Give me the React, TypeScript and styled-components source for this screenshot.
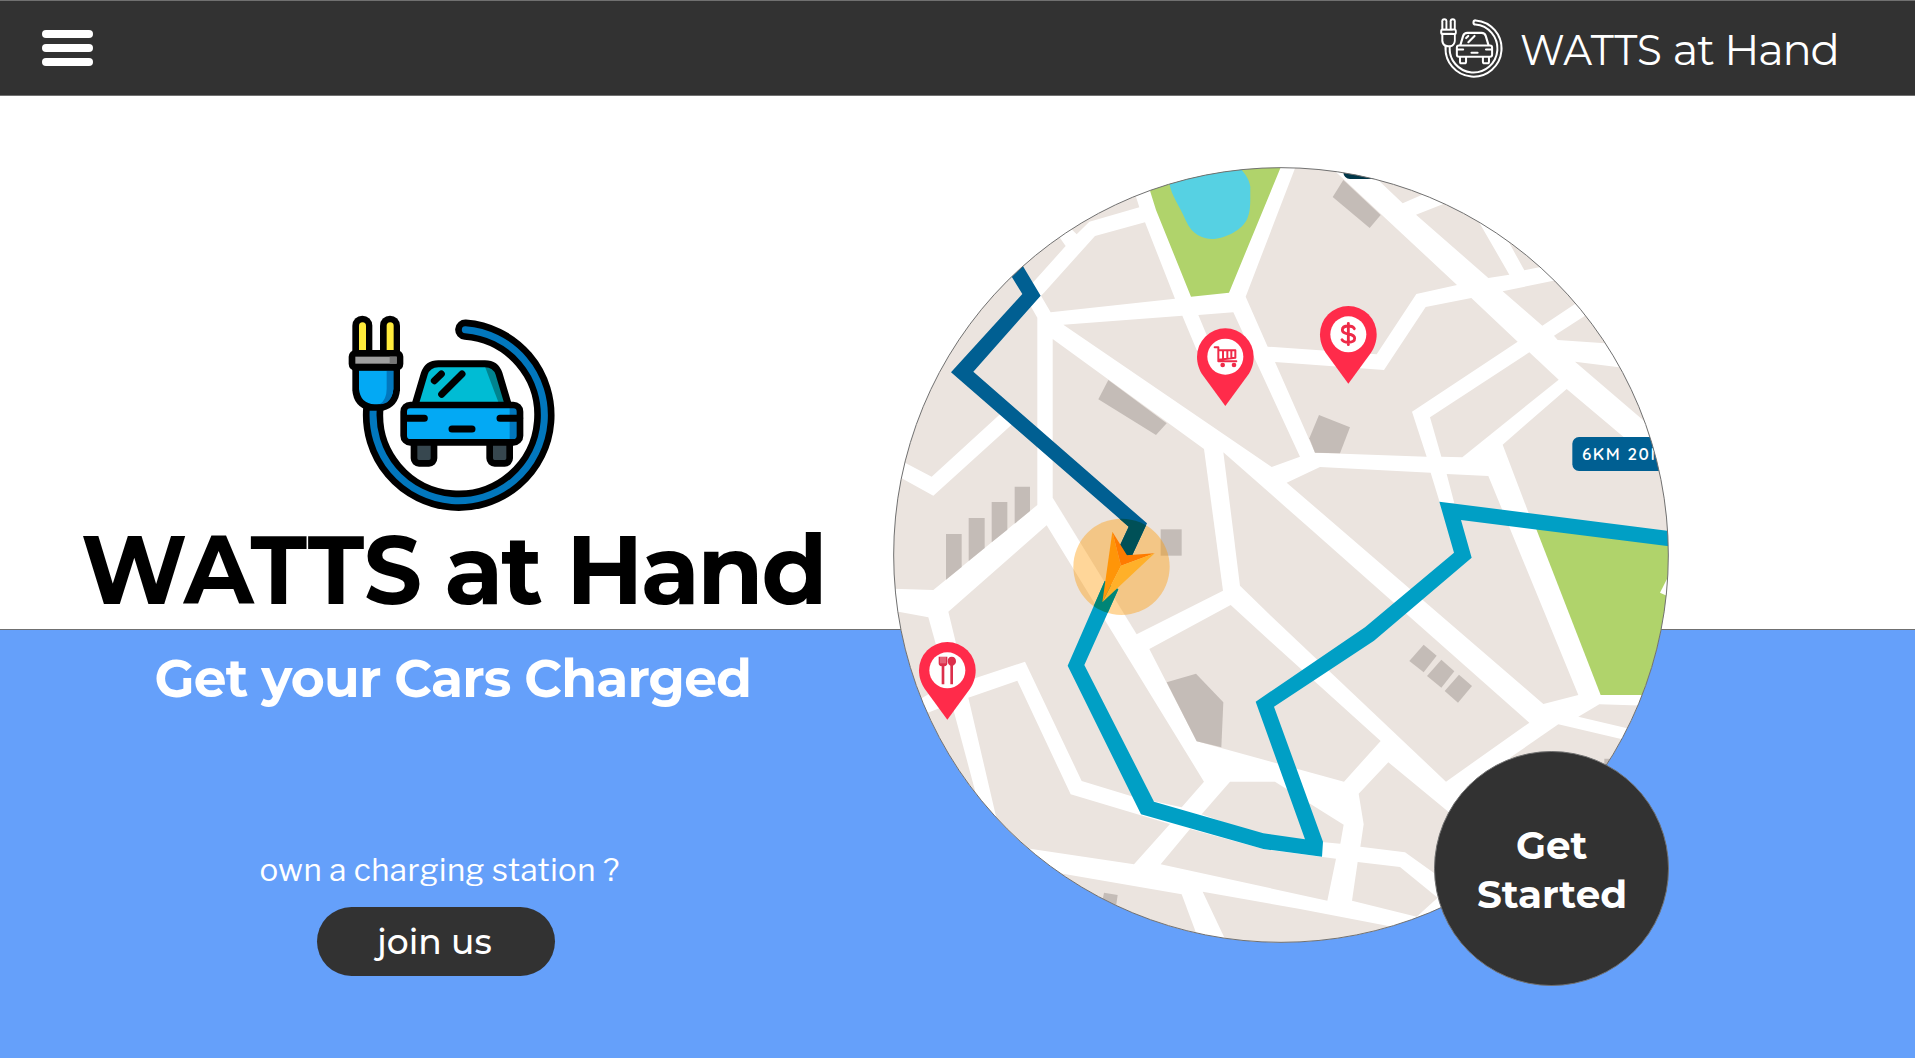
import React from 'react';
import styled, { createGlobalStyle } from 'styled-components';

const GlobalStyle = createGlobalStyle`
  *, *::before, *::after { box-sizing: border-box; }
  body { margin: 0; background: #ffffff; font-family: Montserrat, Inter, sans-serif; overflow: hidden; }
  h1, p { margin: 0; }
`;

const dark = '#323232';
const blue = '#65a0fa';
const outline = '#707070';

const Page = styled.div`
  display: flex;
  flex-direction: column;
  height: 1058px;
`;

const Header = styled.header`
  display: flex;
  align-items: center;
  justify-content: space-between;
  height: 96px;
  padding: 0 79px 0 42px;
  background: ${dark};
  border: solid ${outline};
  border-width: 1px 0;
`;

const MenuButton = styled.button`
  display: flex;
  flex-direction: column;
  gap: 6px;
  width: 51px;
  padding: 0;
  border: 0;
  background: none;
`;

const MenuBar = styled.span`
  height: 8px;
  border-radius: 4px;
  background: #ffffff;
`;

const Brand = styled.div`
  display: flex;
  align-items: center;
  gap: 17px;
`;

const Line = styled.span<{ $width: number; $spacing?: number }>`
  display: block;
  width: ${(p) => p.$width}px;
  letter-spacing: ${(p) => p.$spacing ?? 0}px;
  text-align: left;
  white-space: nowrap;
`;

const Word = styled.span<{ $spacing: number }>`
  letter-spacing: ${(p) => p.$spacing}em;
`;

const CondensedWord = styled.span<{ $scale: number; $trim: number }>`
  display: inline-block;
  margin-right: -${(p) => p.$trim}em;
  transform: scaleX(${(p) => p.$scale});
  transform-origin: left center;
`;

const BrandName = styled.div`
  padding-top: 3px;
  color: #ffffff;
  font-size: 43.3px;
  font-weight: 400;
  line-height: 50px;
`;

const Hero = styled.main`
  display: flex;
  flex: 1;
  background: linear-gradient(#ffffff 0 533px, ${outline} 533px 534px, ${blue} 534px);
`;

const Intro = styled.section`
  display: flex;
  flex-direction: column;
  align-items: center;
  width: 893px;
  padding: 219px 0 0 11px;
`;

const Title = styled.h1`
  margin-top: 8px;
  color: #000000;
  font-size: 96px;
  font-weight: 700;
  line-height: 100px;
`;

const Tagline = styled.p`
  margin-top: 29px;
  color: #ffffff;
  font-size: 52px;
  font-weight: 700;
  line-height: 60px;
`;

const Join = styled.div`
  display: flex;
  flex-direction: column;
  align-items: center;
  gap: 17px;
  margin: 141px 32px 0 0;
`;

const Question = styled.p`
  padding-left: 5px;
  color: #ffffff;
  font-family: 'Libre Franklin', 'Open Sans', sans-serif;
  font-size: 31.3px;
  line-height: 40px;
`;

const JoinButton = styled.button`
  display: flex;
  align-items: center;
  justify-content: center;
  width: 238px;
  height: 69px;
  padding: 0 2px 0 0;
  border: 0;
  border-radius: 35px;
  background: ${dark};
  color: #ffffff;
  font-family: inherit;
  font-size: 34.5px;
  font-weight: 500;
`;

const MapArea = styled.section`
  position: relative;
  width: 776px;
  height: 776px;
  margin-top: 71px;
`;

const StartButton = styled.button`
  position: absolute;
  right: 0;
  bottom: -43px;
  display: flex;
  flex-direction: column;
  align-items: center;
  justify-content: center;
  width: 235px;
  height: 235px;
  padding: 2px 0 0 1px;
  border: 1px solid ${outline};
  border-radius: 50%;
  background: ${dark};
  color: #ffffff;
  font-family: inherit;
  font-size: 38.9px;
  font-weight: 700;
  line-height: 49px;
`;

const colourful = {
  line: '#000000', cable: '#0277bd', prong: '#ffeb3b', collar: '#9e9e9e', collarShade: '#757575',
  body: '#03a9f4', shade: '#0277bd', glass: '#00bcd4', glassShade: '#00838f', wheel: '#37474f',
};

const mono: typeof colourful = {
  line: '#ffffff', cable: dark, prong: dark, collar: dark, collarShade: dark,
  body: dark, shade: dark, glass: dark, glassShade: dark, wheel: dark,
};

const cablePath = 'M437 120 A257 257 0 1 1 161 355';

const CarLogo = ({ width, height, c }: { width: number; height: number; c: typeof colourful }) => (
  <svg width={width} height={height} viewBox="85 76 624 591" preserveAspectRatio="none">
    <path d={cablePath} fill="none" stroke={c.line} strokeWidth="61" strokeLinecap="round" />
    <path d={cablePath} fill="none" stroke={c.cable} strokeWidth="21" strokeLinecap="round" />
    {[98, 181].map((x) => (
      <g key={x}>
        <path d={`M${x} 200V108a30 30 0 0 1 60 0V200Z`} fill={c.line} />
        <path d={`M${x + 20} 181V108a10.500 10.500 0 0 1 21 0V181Z`} fill={c.prong} />
      </g>
    ))}
    <path d="M98 230H241V302Q236 352 190 363H149Q102 352 98 302Z" fill={c.line} />
    <path d="M118 242H221V298Q216 344 172 344H165Q122 342 118 298Z" fill={c.body} />
    <path d="M201 242H221V298Q216 344 180 344Q201 330 201 298Z" fill={c.shade} />
    <rect x="87" y="181" width="164" height="62" rx="20" fill={c.line} />
    <rect x="107" y="201" width="124" height="21" fill={c.collar} />
    <rect x="210" y="201" width="21" height="21" fill={c.collarShade} />
    {[283, 510].map((x) => (
      <rect key={x} x={x} y="448" width="60" height="73" rx="15" fill={c.wheel} stroke={c.line} strokeWidth="20" />
    ))}
    <path d="M286 346L314 252Q324 222 356 222H496Q528 222 538 252L566 346Z" fill={c.glass} />
    <path d="M495 228Q524 232 532 254L558 340H537Z" fill={c.glassShade} />
    <path d="M286 346L314 252Q324 222 356 222H496Q528 222 538 252L566 346" fill="none" stroke={c.line} strokeWidth="21" />
    <rect x="252" y="346" width="349" height="112" rx="20" fill={c.body} />
    <rect x="570" y="350" width="25" height="104" fill={c.shade} />
    <rect x="252" y="346" width="349" height="112" rx="20" fill="none" stroke={c.line} strokeWidth="20" />
    <path
      d="M365 253L344 273M427 253L366 314M255 386H314M541 386H600M397 418H457"
      stroke={c.line} strokeWidth="21" strokeLinecap="round"
    />
  </svg>
);

const blocks = [
  '500,100 740,60 768,140 778,172 628,215 590,253 577,240',
  '-50,200 300,100 530,250 557,288 430,430 472,503 472,1065 160,1320 -50,1314',
  '645,258 795,217 885,446 512,487 483,437 492,428',
  '550,524 907,497 950,600 1000,650 980,555 955,495 1060,487 1260,920 1175,951',
  '518,567 972,897 1029,1322 770,1453 518,1043',
  '1245,55 1097,440 1163,590 1490,613 1609,432 1731,405 1370,68 1340,40 1250,40',
  '1185,636 1512,660 1637,471 1774,444 1913,575 1596,785 1640,920 1305,908',
  '1650,802 1948,607 2036,689 1747,922 1684,920',
  '1868,884 2060,717 2230,860 2400,1000 2400,1160 1950,1100',
  '1220,998 1320,951 1652,968 1680,1060 1723,1060 1700,972 1825,978 2095,1635 1990,1662',
  '1030,907 1295,1140 1948,1718 1698,1895 1170,1395 1080,1307',
  '1052,1365 808,1497 950,1774 1190,1840 1392,1895 1502,1773 1170,1473',
  '1050,1895 1185,1895 1391,2024 1381,2081 1150,2060 965,1993',
  '930,2037 1150,2097 1368,2126 1342,2252 842,2143',
  '265,1643 412,1592 572,1933 870,2022 762,2143 455,2097 368,2085',
  '205,1385 500,1126 972,1895 905,1972 760,1940 605,1893 435,1535 260,1593 228,1480',
  '0,1375 145,1402 200,1600 125,1645 0,1690',
  '140,1690 215,1660 290,1940 240,2000 60,1800',
  '540,2170 905,2233 948,2348 960,2400 500,2400',
  '968,2225 1260,2277 1525,2328 1600,2342 1600,2420 1060,2420',
  '1433,2136 1560,2151 1673,2243 1610,2300 1416,2252',
  '1436,1931 1525,1837 1705,1985 1760,2030 1760,2240 1663,2170 1575,2107 1441,2090 1451,2023',
  '2035,1723 2300,1785 2300,1950 1890,1823',
  '2158,1663 2350,1669 2350,1760 2095,1700',
  '1500,95 1568,160 1625,135 1700,100 1700,50 1450,50',
  '1608,194 1690,162 1760,140 1802,225 1888,374 1825,384',
  '1890,283 1933,361 1978,352 2000,347 1950,250 1870,250',
  '1868,424 2020,392 2060,383 2120,438 2085,462 1987,527',
  '2022,557 2115,497 2200,445 2250,585 2175,580 2033,570',
  '2085,635 2217,652 2350,670 2350,860 2295,815',
];

const buildings = [
  '198,1152 245,1152 245,1251 198,1289',
  '266,1104 314,1104 314,1194 266,1233',
  '335,1056 382,1056 382,1139 335,1177',
  '404,1010 450,1010 450,1083 404,1121',
  '685,690 860,820 828,855 655,748',
  '842,1138 905,1138 905,1217 842,1217',
  '1390,90 1502,195 1469,234 1358,141',
  '1317,795 1410,832 1380,910 1305,908 1288,865',
  '1631,1484 1670,1517 1631,1567 1588,1533',
  '1684,1529 1723,1564 1684,1613 1641,1578',
  '1737,1574 1776,1608 1734,1658 1694,1623',
  '860,1597 948,1571 1030,1657 1024,1792 950,1774',
  '672,2228 713,2235 705,2290 660,2290',
  '2173,1826 2210,1826 2210,1880 2173,1880',
];

const pastRoute = '365,331 400,300 482,437 280,665 801,1120 757,1215 738,1217 718,1190 746,1130 213,667 427,432';
const nextRoute =
  '674,1293 715,1318 613,1545 822,1955 1150,2050 1275,2068 1127,1655 1455,1432 1722,1208 1678,1055 2400,1147 2400,1193 1743,1110 1775,1223 1482,1472 1182,1670 1329,2075 1326,2120 1150,2097 783,1993 563,1547';

const Pin = ({ x, y, children }: { x: number; y: number; children: React.ReactNode }) => (
  <g transform={`translate(${x} ${y})`}>
    <path d="M-85 0A85 85 0 0 1 85 0C85 22 78 40 68 55L0 148L-68 55C-78 40 -85 22 -85 0Z" fill="#ff2b4a" />
    <circle r="54" fill="#ffffff" />
    {children}
  </g>
);

const CityMap = () => (
  <svg width="776" height="776" viewBox="39 51 2328 2328">
    <defs>
      <clipPath id="lens"><circle cx="1203" cy="1215" r="1162" /></clipPath>
      <clipPath id="halo"><circle cx="724.5" cy="1250.5" r="144.5" /></clipPath>
    </defs>
    <g clipPath="url(#lens)">
      <rect x="0" y="0" width="2420" height="2420" fill="#ffffff" />
      {blocks.map((points) => <polygon key={points} points={points} fill="#ebe4df" />)}
      <polygon points="40,920 75,938 155,980 360,793 400,820 160,1037 65,985 30,965" fill="#ffffff" />
      {buildings.map((points) => <polygon key={points} points={points} fill="#c4bcb7" />)}
      <polygon points="780,40 810,122 828,180 933,440 1047,428 1207,40" fill="#b0d36b" />
      <path d="M862 50L868 100C876 142 896 162 918 213C936 254 970 268 1000 267C1040 264 1086 240 1101 208C1114 180 1110 150 1111 110C1106 80 1090 68 1078 50Z" fill="#56d1e3" />
      <polygon points="1962,1120 2162,1635 2400,1635 2400,1170" fill="#b0d36b" />
      <polygon points="2340,1328 2372,1265 2390,1350" fill="#ffffff" />
      <rect x="1390" y="0" width="300" height="87" rx="20" fill="#003749" />
      <circle cx="724.5" cy="1250.5" r="144.5" fill="#ff9800" fillOpacity="0.4" />
      <polygon points={pastRoute} fill="#005f92" />
      <polygon points={nextRoute} fill="#009fc5" />
      <g clipPath="url(#halo)">
        <polygon points={pastRoute} fill="#005057" />
        <polygon points={nextRoute} fill="#008576" />
      </g>
      <polygon points="697,1145 723,1247 667,1357" fill="#ff9508" />
      <polygon points="697,1145 741,1216 824,1210 723,1247" fill="#ff7b00" />
      <polygon points="824,1210 667,1357 723,1247" fill="#ffb029" />
      <Pin x={1036} y={620}>
        <path
          d="M-32 -28H-21V14H33M-21 -19H30V3L-19 9M-7 -19V6M6 -19V5M18 -19V4"
          fill="none" stroke="#f02a48" strokeWidth="6" strokeLinecap="round" strokeLinejoin="round"
        />
        <circle cx="-8" cy="25" r="7" fill="#f02a48" />
        <circle cx="26" cy="25" r="7" fill="#f02a48" />
      </Pin>
      <Pin x={1405} y={553}>
        <path
          d="M18 -17Q14 -25 0 -25Q-18 -25 -18 -13Q-18 -4 0 -1Q19 2 19 12Q19 24 0 24Q-15 24 -19 16M0 -33V31"
          fill="none" stroke="#ee2a48" strokeWidth="8.500" strokeLinecap="round"
        />
      </Pin>
      <Pin x={202} y={1561}>
        <path d="M-26 -41V-21Q-26 -13 -17 -12V42H-9V-12Q0 -13 0 -21V-41Z" fill="#dc2f4b" />
        <path d="M-19 -41V-21M-13 -41V-21M-7 -41V-21" stroke="#ffffff" strokeWidth="1.500" />
        <path d="M9 -14Q1 -18 1 -27Q1 -41 13 -41Q26 -41 26 -27Q26 -18 17 -14V42H9Z" fill="#dc2f4b" />
      </Pin>
      <rect x="2077" y="861" width="340" height="102" rx="20" fill="#005f92" />
      <text x="2106" y="929" fill="#ffffff" fontFamily="Quicksand, Montserrat, sans-serif" fontSize="51" fontWeight="650" letterSpacing="4.600">
        6KM 20M
      </text>
    </g>
    <circle cx="1203" cy="1215" r="1162" fill="none" stroke={outline} strokeWidth="3" />
  </svg>
);

const Wordmark = ({ scale, trim }: { scale: number; trim: number }) => (
  <>
    <CondensedWord $scale={scale} $trim={trim}>WATTS</CondensedWord>{' '}
    <Word $spacing={-0.022}>at </Word>
    <Word $spacing={-0.029}>Hand</Word>
  </>
);

export default function App() {
  return (
    <>
      <GlobalStyle />
      <Page>
        <Header>
          <MenuButton aria-label="Menu">
            <MenuBar /><MenuBar /><MenuBar />
          </MenuButton>
          <Brand>
            <CarLogo width={63} height={60} c={mono} />
            <BrandName><Line $width={316}><Wordmark scale={0.93} trim={0.255} /></Line></BrandName>
          </Brand>
        </Header>
        <Hero>
          <Intro>
            <CarLogo width={208} height={197} c={colourful} />
            <Title><Line $width={743}><Wordmark scale={0.951} trim={0.23} /></Line></Title>
            <Tagline><Line $width={595} $spacing={-0.85}>Get your Cars Charged</Line></Tagline>
            <Join>
              <Question><Line $width={358} $spacing={0.4}>own a charging station ?</Line></Question>
              <JoinButton><Line $width={116}>join us</Line></JoinButton>
            </Join>
          </Intro>
          <MapArea>
            <CityMap />
            <StartButton>
              <Line $width={72}>Get</Line>
              <Line $width={150}>Started</Line>
            </StartButton>
          </MapArea>
        </Hero>
      </Page>
    </>
  );
}
